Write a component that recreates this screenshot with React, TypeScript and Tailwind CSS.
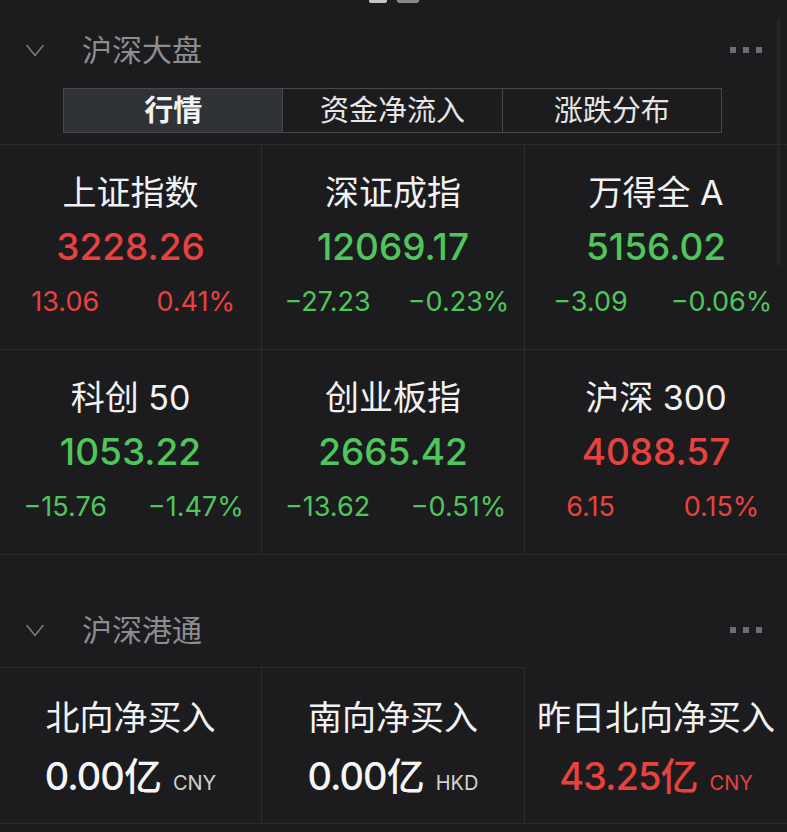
import type { FC } from "react";

type Tone = "up" | "down";

interface IndexItem {
  name: string;
  value: string;
  change: string;
  percent: string;
  tone: Tone;
}

const indices: IndexItem[] = [
  { name: "上证指数", value: "3228.26", change: "13.06", percent: "0.41%", tone: "up" },
  { name: "深证成指", value: "12069.17", change: "−27.23", percent: "−0.23%", tone: "down" },
  { name: "万得全 A", value: "5156.02", change: "−3.09", percent: "−0.06%", tone: "down" },
  { name: "科创 50", value: "1053.22", change: "−15.76", percent: "−1.47%", tone: "down" },
  { name: "创业板指", value: "2665.42", change: "−13.62", percent: "−0.51%", tone: "down" },
  { name: "沪深 300", value: "4088.57", change: "6.15", percent: "0.15%", tone: "up" },
];

const flows = [
  { name: "北向净买入", value: "0.00", unit: "CNY", red: false },
  { name: "南向净买入", value: "0.00", unit: "HKD", red: false },
  { name: "昨日北向净买入", value: "43.25", unit: "CNY", red: true },
];

const tabs = ["行情", "资金净流入", "涨跌分布"];

const SectionHeader: FC<{ title: string }> = ({ title }) => (
  <div className="flex h-[50px] items-center pl-[26px] pr-[25px]">
    <svg width="18" height="13" viewBox="0 0 18 13" fill="none">
      <polyline
        points="1,1.5 9,11.5 17,1.5"
        stroke="#7c7c80"
        strokeWidth="1.5"
        strokeLinejoin="round"
        strokeLinecap="round"
      />
    </svg>
    <span className="ml-[38px] text-[30px] leading-none text-[#8d8d91]">{title}</span>
    <div className="ml-auto flex gap-[7px]">
      <span className="h-[6px] w-[6px] bg-[#6e6e72]" />
      <span className="h-[6px] w-[6px] bg-[#6e6e72]" />
      <span className="h-[6px] w-[6px] bg-[#6e6e72]" />
    </div>
  </div>
);

export default function App() {
  return (
    <div className="relative h-[832px] w-[787px] overflow-hidden bg-[#1c1c1e] font-['Inter','Noto_Sans_CJK_SC',sans-serif]">
      {/* page indicator */}
      <div className="flex h-[25px] justify-center gap-[10px]">
        <span className="h-[3px] w-[18px] rounded-b-[2px] bg-[#c4c4c6]" />
        <span className="h-[3px] w-[22px] rounded-b-[2px] bg-[#88888a]" />
      </div>

      <SectionHeader title="沪深大盘" />

      <div className="ml-[63px] mt-[13px] flex h-[45px] w-[659px] border border-[#48484b]">
        {tabs.map((t, i) => (
          <div
            key={t}
            className={
              i === 0
                ? "flex flex-1 items-center justify-center bg-[#2f3338] text-[29px] font-semibold text-[#f2f2f2]"
                : "flex flex-1 items-center justify-center border-l border-[#48484b] text-[29px] text-[#e6e6e6]"
            }
          >
            {t}
          </div>
        ))}
      </div>

      <div className="mt-[11px] grid grid-cols-[262px_263px_262px] border-t border-[#2c2c2e]">
        {indices.map((it, i) => {
          const color = it.tone === "up" ? "text-[#e8423e]" : "text-[#4fc65b]";
          return (
            <div
              key={it.name}
              className={
                i % 3 === 2
                  ? "flex h-[205px] flex-col items-center border-b border-[#2c2c2e] pt-[28px]"
                  : "flex h-[205px] flex-col items-center border-b border-r border-[#2c2c2e] pt-[28px]"
              }
            >
              <div className="text-[34px] leading-[40px] text-[#f2f2f2]">{it.name}</div>
              <div className={`mt-[10px] text-[37px] font-medium leading-[48px] ${color}`}>{it.value}</div>
              <div className={`mt-[14px] grid w-full grid-cols-2 text-center text-[27px] leading-[34px] ${color}`}>
                <span>{it.change}</span>
                <span>{it.percent}</span>
              </div>
            </div>
          );
        })}
      </div>

      <div className="mt-[50px]">
        <SectionHeader title="沪深港通" />
      </div>

      <div className="mt-[12px] grid grid-cols-[262px_263px_262px]">
        {flows.map((f, i) => (
          <div
            key={f.name}
            className={
              i === 2
                ? "flex h-[157px] flex-col items-center border-b border-t border-b-[#2c2c2e] border-t-transparent pt-[30px]"
                : "flex h-[157px] flex-col items-center border-b border-r border-t border-[#2c2c2e] pt-[30px]"
            }
          >
            <div className="text-[34px] leading-[40px] text-[#f2f2f2]">{f.name}</div>
            <div
              className={
                f.red
                  ? "mt-[16px] flex items-baseline leading-[44px] text-[#e8423e]"
                  : "mt-[16px] flex items-baseline leading-[44px] text-[#f5f5f5]"
              }
            >
              <span className="text-[38px] font-medium tracking-[-1px]">{f.value}亿</span>
              <span className={f.red ? "ml-[12px] text-[20px] text-[#e8423e]" : "ml-[12px] text-[20px] text-[#d2d2d4]"}>
                {f.unit}
              </span>
            </div>
          </div>
        ))}
      </div>

      {/* scroll indicator */}
      <div className="absolute right-[7px] top-[18px] h-[248px] w-[3px] rounded-full bg-[#262628]" />
    </div>
  );
}
